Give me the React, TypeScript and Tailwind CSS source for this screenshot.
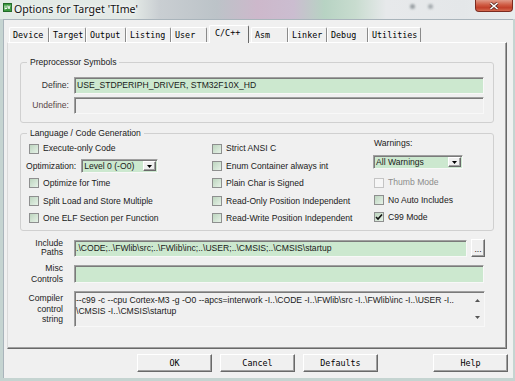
import React from "react";

const sunken =
  "border border-t-[#a0a0a0] border-l-[#a0a0a0] border-r-[#f8f8f8] border-b-[#f8f8f8] shadow-[inset_1px_1px_0_#7a7a7a]";
const raised =
  "border border-t-white border-l-white border-r-[#696969] border-b-[#696969] shadow-[inset_-1px_-1px_0_#a0a0a0] bg-[#f0f0f0]";
const mono = "font-['DejaVu_Sans_Mono',monospace] text-[8.4px] leading-none text-black";

const tabs: [string, number, boolean?][] = [
  ["Device", 40],
  ["Target", 37],
  ["Output", 40],
  ["Listing", 45],
  ["User", 36],
  ["C/C++", 40, true],
  ["Asm", 37],
  ["Linker", 39],
  ["Debug", 41],
  ["Utilities", 53],
];

function Check({ checked, disabled }: { checked?: boolean; disabled?: boolean }) {
  return (
    <span
      className={
        disabled
          ? "w-[10px] h-[10px] shrink-0 border border-[#c4c4c4] bg-[#f6f6f6]"
          : "w-[10px] h-[10px] shrink-0 border border-[#8e8f8f] bg-[linear-gradient(135deg,#bdd5bf,#e6f2e7)] flex items-center justify-center"
      }
    >
      {checked && (
        <svg width="8" height="8" viewBox="0 0 8 8">
          <path d="M1 4 L3 6 L7 1.5" fill="none" stroke="#111" strokeWidth="1.6" />
        </svg>
      )}
    </span>
  );
}

function Row({ label, checked, disabled }: { label: string; checked?: boolean; disabled?: boolean }) {
  return (
    <div className="flex items-center h-[17.4px] gap-[4px]">
      <Check checked={checked} disabled={disabled} />
      <span className={disabled ? "text-[#8d8d8d]" : ""}>{label}</span>
    </div>
  );
}

function Select({ value, width }: { value: string; width: string }) {
  return (
    <div className={`flex items-center h-[14px] bg-[#cce8cf] ${sunken} ${width}`}>
      <span className="flex-1 pl-[2px] whitespace-nowrap">{value}</span>
      <span className={`w-[13px] h-[10px] mr-[1px] flex items-center justify-center ${raised}`}>
        <svg width="5" height="3" viewBox="0 0 5 3">
          <path d="M0 0 H5 L2.5 3 Z" fill="#000" />
        </svg>
      </span>
    </div>
  );
}

export default function App() {
  return (
    <div className="w-[515px] h-[381px] flex flex-col overflow-hidden bg-[#c5d4d1] font-['Liberation_Sans',Arial,sans-serif] text-[8.6px] leading-none text-[#1a1a1a]">
      {/* title bar */}
      <div className="h-[19px] shrink-0 flex items-start bg-[linear-gradient(90deg,#e2ebe6_0%,#e3e9e6_26%,#c9ced2_31%,#bcc3c8_42%,#cdb8cb_50%,#cbbdd0_57%,#b7d3c3_63%,#c8dccf_69%,#e7e9eb_75%,#e4e7e9_90%,#e9edee_100%)]">
        <svg width="9" height="9" viewBox="0 0 9 9" className="ml-[3px] mt-[3px] shrink-0">
          <rect x="0.5" y="0.5" width="8" height="8" fill="#3a9a3e" stroke="#1f6a26" />
          <path d="M2 2.5 V6.5 M2 5.5 H4 V2.5 M5 2.5 L6 6 L7 2.5" fill="none" stroke="#fff" strokeWidth="0.9" />
        </svg>
        <span className="ml-[2px] mt-[3px] font-['Noto_Sans',sans-serif] text-[10.6px] leading-[13px] text-[#111] [text-shadow:0_0_6px_#fff,0_0_3px_#fff] whitespace-nowrap">
          Options for Target 'TIme'
        </span>
        <div className="flex-1" />
        <span className="w-[5px] h-[5px] mt-[4px] rounded-full bg-[#9aa0a4] blur-[1px]" />
        <span className="w-[5px] h-[5px] mt-[4px] ml-[13px] mr-[42px] rounded-full bg-[#a7adb1] blur-[1px]" />
        <div className="w-[38px] h-[12px] mr-[2px] rounded-b-[4px] border border-t-0 border-[#7c2b20] bg-[linear-gradient(180deg,#e09a88_0%,#cf5a42_45%,#c2402a_70%,#d46a4f_100%)] flex items-center justify-center">
          <svg width="10" height="8" viewBox="0 0 10 8">
            <path d="M1.5 1 L8.5 7 M8.5 1 L1.5 7" stroke="#5a2a22" strokeWidth="3" />
            <path d="M1.5 1 L8.5 7 M8.5 1 L1.5 7" stroke="#fff" strokeWidth="1.6" />
          </svg>
        </div>
      </div>

      {/* client area */}
      <div className="flex-1 flex pl-[3px] pr-[2px] pb-[3px]">
        <div className="flex-1 bg-[#f0f0f0] border-t border-l border-[#a9b4bb] flex flex-col">
          {/* tabs */}
          <div className="flex items-end h-[17px] mt-[5px] ml-[5px]">
            {tabs.map(([name, w, sel]) =>
              sel ? (
                <div
                  key={name}
                  style={{ width: w }}
                  className={`relative z-10 h-[18px] -mb-[1px] mx-[2px] bg-[#f0f0f0] border-t border-l border-r border-t-white border-l-white border-r-[#696969] rounded-t-[2px] pl-[5px] pt-[3px] ${mono}`}
                >
                  {name}
                </div>
              ) : (
                <div
                  key={name}
                  style={{ width: w }}
                  className={`h-[15px] border-t border-l border-r border-t-white border-l-white border-r-[#8a8a8a] rounded-t-[2px] pl-[3px] flex items-center ${mono}`}
                >
                  {name}
                </div>
              )
            )}
          </div>

          {/* tab panel */}
          <div className="w-[500px] h-[307px] ml-[3px] border border-t-white border-l-[#dadada] border-r-[#696969] border-b-[#696969] shadow-[inset_-1px_-1px_0_#a0a0a0] flex flex-col">
            {/* Preprocessor Symbols */}
            <fieldset className="mt-[14px] ml-[12px] w-[474px] border border-[#d0d0d0] rounded-[3px]">
              <legend className="ml-[6px] px-[3px] leading-[10px]">Preprocessor Symbols</legend>
              <div className="pt-[10px] pb-[8px] flex flex-col gap-[3px]">
                <div className="flex items-center gap-[5px]">
                  <span className="w-[48px] text-right text-[#333]">Define:</span>
                  <div className={`w-[410px] h-[17px] bg-[#cce8cf] flex items-center pl-[2px] whitespace-nowrap ${sunken}`}>
                    USE_STDPERIPH_DRIVER, STM32F10X_HD
                  </div>
                </div>
                <div className="flex items-center gap-[5px]">
                  <span className="w-[48px] text-right text-[#5b4747]">Undefine:</span>
                  <div className={`w-[410px] h-[17px] bg-[#f0f0f0] ${sunken}`} />
                </div>
              </div>
            </fieldset>

            {/* Language / Code Generation */}
            <fieldset className="mt-[5px] ml-[12px] w-[474px] border border-[#d0d0d0] rounded-[3px]">
              <legend className="ml-[6px] px-[3px] leading-[10px]">Language / Code Generation</legend>
              <div className="pt-[2px] pb-[3px] pl-[8px] flex">
                <div className="w-[183px] flex flex-col">
                  <Row label="Execute-only Code" />
                  <div className="flex items-center h-[17.4px] -ml-[3px] gap-[5px]">
                    <span>Optimization:</span>
                    <Select value="Level 0 (-O0)" width="w-[77px]" />
                  </div>
                  <Row label="Optimize for Time" />
                  <Row label="Split Load and Store Multiple" />
                  <Row label="One ELF Section per Function" />
                </div>
                <div className="w-[162px] flex flex-col">
                  <Row label="Strict ANSI C" />
                  <Row label="Enum Container always int" />
                  <Row label="Plain Char is Signed" />
                  <Row label="Read-Only Position Independent" />
                  <Row label="Read-Write Position Independent" />
                </div>
                <div className="flex-1 flex flex-col">
                  <span className="-mt-[2px] leading-[10px]">Warnings:</span>
                  <div className="mt-[7px] -ml-[1px]">
                    <Select value="All Warnings" width="w-[90px]" />
                  </div>
                  <div className="mt-[5px] flex flex-col">
                    <Row label="Thumb Mode" disabled />
                    <Row label="No Auto Includes" />
                    <Row label="C99 Mode" checked />
                  </div>
                </div>
              </div>
            </fieldset>

            {/* Include / Misc / Compiler */}
            <div className="mt-[9px] ml-[12px] flex flex-col gap-[8px]">
              <div className="flex items-center h-[17px]">
                <span className="w-[43px] text-right leading-[9.5px] text-[#222]">
                  Include
                  <br />
                  Paths
                </span>
                <div className={`ml-[11px] w-[393px] h-[17px] bg-[#cce8cf] flex items-center pl-[1px] whitespace-nowrap overflow-hidden ${sunken}`}>
                  {".\\CODE;..\\FWlib\\src;..\\FWlib\\inc;..\\USER;..\\CMSIS;..\\CMSIS\\startup"}
                </div>
                <div className={`ml-[4px] w-[14px] h-[18px] flex items-end justify-center pb-[3px] ${raised}`}>
                  <span className="leading-none">...</span>
                </div>
              </div>
              <div className="flex items-center h-[18px]">
                <span className="w-[43px] text-right leading-[11px] text-[#222]">
                  Misc
                  <br />
                  Controls
                </span>
                <div className={`ml-[11px] w-[410px] h-[18px] bg-[#cce8cf] ${sunken}`} />
              </div>
              <div className="flex items-center h-[36px]">
                <span className="w-[43px] text-right leading-[10.5px] text-[#222]">
                  Compiler
                  <br />
                  control
                  <br />
                  string
                </span>
                <div className={`ml-[11px] w-[411px] h-[36px] bg-[#f0f0f0] flex ${sunken}`}>
                  <div className="flex-1 pl-[1px] pt-[3px] leading-[11px] whitespace-pre overflow-hidden">
                    {"--c99 -c --cpu Cortex-M3 -g -O0 --apcs=interwork -I..\\CODE -I..\\FWlib\\src -I..\\FWlib\\inc -I..\\USER -I..\n\\CMSIS -I..\\CMSIS\\startup"}
                  </div>
                  <div className="w-[14px] flex flex-col items-center justify-between pt-[7px] pb-[7px]">
                    <svg width="5" height="3" viewBox="0 0 5 3">
                      <path d="M0 3 H5 L2.5 0 Z" fill="#555" />
                    </svg>
                    <svg width="5" height="3" viewBox="0 0 5 3">
                      <path d="M0 0 H5 L2.5 3 Z" fill="#555" />
                    </svg>
                  </div>
                </div>
              </div>
            </div>
          </div>

          {/* buttons */}
          <div className="flex mt-[5px] ml-[133px] mr-[5px] gap-[8px]">
            {["OK", "Cancel", "Defaults"].map((b) => (
              <div key={b} className={`w-[75px] h-[18px] flex items-center justify-center ${raised} ${mono}`}>
                {b}
              </div>
            ))}
            <div className={`ml-auto w-[75px] h-[18px] flex items-center justify-center ${raised} ${mono}`}>Help</div>
          </div>
        </div>
      </div>
    </div>
  );
}
